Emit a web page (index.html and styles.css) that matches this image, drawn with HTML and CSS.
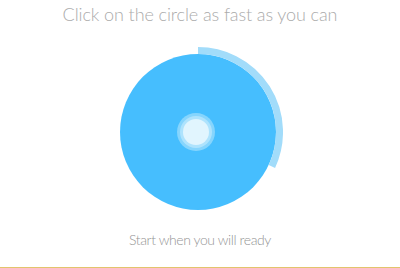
FILE: index.html
```html
<!DOCTYPE html>
<html lang="en">
<head>
    <meta charset="UTF-8">
    <meta name="viewport" content="width=device-width, initial-scale=1.0">
    <title>Click Speed</title>
    <link rel="stylesheet" href="styles.css">
</head>
<body>
    <div class="page">
        <h1 class="title">Click on the circle as fast as you can</h1>

        <!-- Target -->
        <div class="target">
            <svg class="target-svg" width="170" height="170" viewBox="0 0 170 170">
                <circle cx="85" cy="85" r="78" fill="#46befe"/>
                <path d="M85 3.5 A81.5 81.5 0 0 1 158.9 119.4" fill="none" stroke="#a2dcfa" stroke-width="7"/>
            </svg>
            <div class="dot"></div>
        </div>

        <p class="hint">Start when you will ready</p>
    </div>
</body>
</html>
```

FILE: styles.css
```css
body {
    margin: 0;
    background-color: #fff;
    font-family: "Lato Light", "Lato", "Open Sans", sans-serif;
}
.page {
    height: 267px;
    border-bottom: 1px solid #e2c46c;
    display: flex;
    flex-direction: column;
    align-items: center;
}
.title {
    margin: 3px 0 0;
    font-size: 18px;
    font-weight: 300;
    line-height: 22px;
    letter-spacing: -0.1px;
    color: #ababab;
}
.target {
    position: relative;
    width: 170px;
    height: 170px;
    margin: 22px 4px 0 0;
    cursor: pointer;
}
.target-svg {
    display: block;
}
.dot {
    position: absolute;
    left: 70px;
    top: 72px;
    width: 26px;
    height: 26px;
    border-radius: 50%;
    background-color: #e1f5fe;
    box-shadow: 0 0 0 3px #aee3fd, 0 0 0 6px #86d5fd;
}
.hint {
    margin: 13px 0 0;
    font-size: 14px;
    font-weight: 300;
    line-height: 20px;
    letter-spacing: -0.4px;
    color: #959595;
}
```
